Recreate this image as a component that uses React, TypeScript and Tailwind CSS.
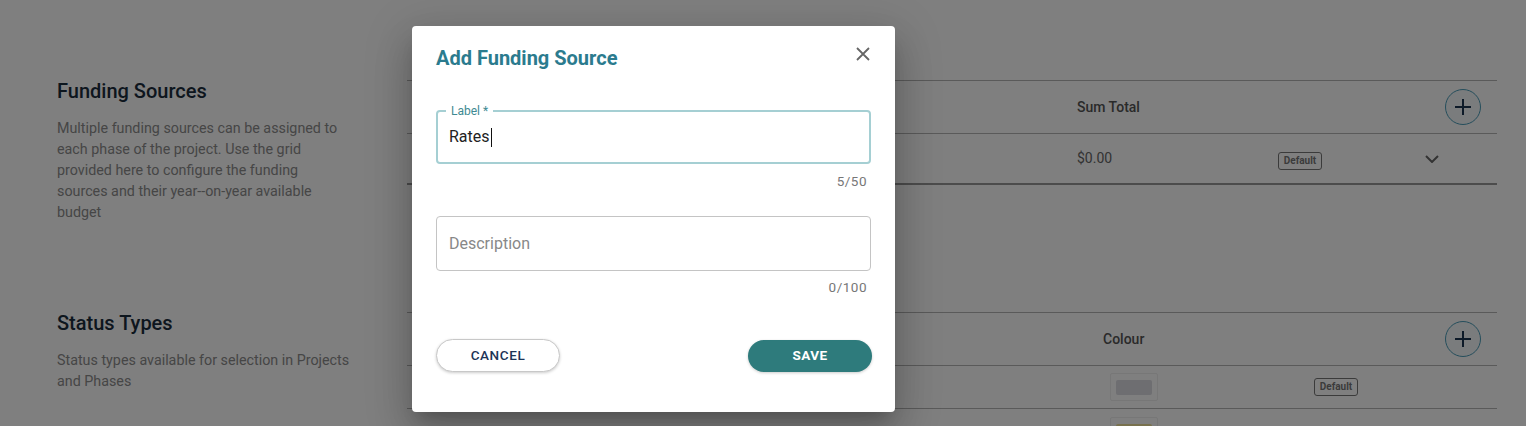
import React from "react";

const font = { fontFamily: "Roboto, 'Liberation Sans', sans-serif" };

function PlusButton() {
  return (
    <div className="w-9 h-9 rounded-full border border-[#4a9cb8] bg-[#f4f8fa] flex items-center justify-center">
      <svg width="18" height="18" viewBox="0 0 18 18" fill="none" stroke="#1a3550" strokeWidth="2">
        <path d="M9 1v16M1 9h16" />
      </svg>
    </div>
  );
}

function Badge() {
  return (
    <span className="inline-flex items-center justify-center w-[44px] h-[18px] border border-[#777] rounded-[3px] text-[10px] font-bold text-[#777] leading-none">
      Default
    </span>
  );
}

function Chevron() {
  return (
    <svg width="14" height="8" viewBox="0 0 14 8" fill="none" stroke="#666" strokeWidth="2">
      <path d="M1 1l6 6 6-6" />
    </svg>
  );
}

export default function App() {
  return (
    <div className="relative w-[1526px] h-[426px] overflow-hidden bg-white" style={font}>
      {/* page */}
      <div className="pt-[80px] pl-[57px] pr-[29px]">
        {/* Funding sources */}
        <div className="flex h-[232px]">
          <div className="w-[350px] shrink-0">
            <h2 className="text-[20px] leading-[22px] font-medium text-[#1b2c3c]">Funding Sources</h2>
            <p className="mt-4 text-[14.3px] leading-[21px] text-[#8c8c8c] w-[286px]">
              Multiple funding sources can be assigned to each phase of the project. Use the grid provided here to configure the funding sources and their year--on-year available budget
            </p>
          </div>
          <div className="flex-1 self-start">
            <div className="flex items-center h-[53px] border-t border-[#b4b4b4]">
              <div className="w-[670px] pl-4 text-[14px] font-medium text-[#555]">Name</div>
              <div className="flex-1 text-[14px] font-medium text-[#555]">Sum Total</div>
              <div className="pr-4"><PlusButton /></div>
            </div>
            <div className="flex items-center h-[52px] border-t border-b-2 border-t-[#b4b4b4] border-b-[#999]">
              <div className="w-[670px] pl-4 text-[14px] text-[#666]">Rates</div>
              <div className="w-[201px] text-[14px] text-[#666]">$0.00</div>
              <div className="w-[147px]"><Badge /></div>
              <Chevron />
            </div>
          </div>
        </div>

        {/* Status types */}
        <div className="flex">
          <div className="w-[350px] shrink-0">
            <h2 className="text-[20px] leading-[22px] font-medium text-[#1b2c3c]">Status Types</h2>
            <p className="mt-4 text-[14.3px] leading-[21px] text-[#8c8c8c] w-[300px]">
              Status types available for selection in Projects and Phases
            </p>
          </div>
          <div className="flex-1 self-start">
            <div className="flex items-center h-[53px] border-t border-[#b4b4b4]">
              <div className="w-[696px] pl-4 text-[14px] font-medium text-[#555]">Name</div>
              <div className="flex-1 text-[14px] font-medium text-[#555]">Colour</div>
              <div className="pr-4"><PlusButton /></div>
            </div>
            <div className="flex items-center h-[43px] border-t border-[#b4b4b4]">
              <div className="w-[703px] pl-4 text-[14px] text-[#666]">Active</div>
              <div className="w-[48px] h-[28px] border border-[#eeeeee] rounded-[2px] flex items-center justify-center">
                <div className="w-[36px] h-[15px] rounded-[2px] bg-[#dcdce2]" />
              </div>
              <div className="w-[156px]" />
              <Badge />
            </div>
            <div className="flex items-start h-[43px] border-t border-[#b4b4b4] pt-[8px]">
              <div className="w-[703px] pl-2 pt-[6px] text-[14px] leading-5 text-[#666]">↑ &nbsp; &nbsp; Approved</div>
              <div className="w-[48px] h-[28px] border border-[#eeeeee] rounded-[2px] flex items-center justify-center">
                <div className="w-[36px] h-[15px] rounded-[2px] bg-[#f0e29c]" />
              </div>
            </div>
          </div>
        </div>
      </div>

      {/* overlay */}
      <div className="absolute inset-0 bg-black/50" />

      {/* modal */}
      <div className="absolute left-[412px] top-[26px] w-[483px] h-[386px] bg-white rounded-[4px] shadow-[0_11px_15px_-7px_rgba(0,0,0,0.2),0_24px_38px_3px_rgba(0,0,0,0.14),0_9px_46px_8px_rgba(0,0,0,0.12)] px-6 pt-5 flex flex-col">
        <div className="flex items-start justify-between">
          <h1 className="text-[20px] leading-6 font-bold text-[#2b7b8e]">Add Funding Source</h1>
          <button className="mt-[1px] mr-[1px]">
            <svg width="14" height="14" viewBox="0 0 14 14" fill="none" stroke="#666" strokeWidth="1.8">
              <path d="M1 1l12 12M13 1L1 13" />
            </svg>
          </button>
        </div>

        <div className="relative mt-10 h-[54px] border-2 border-[#a5cfd3] rounded-[4px] flex items-center px-[11px]">
          <span className="absolute -top-[9px] left-[8px] bg-white px-[5px] text-[12px] leading-4 text-[#3e8a92]">Label *</span>
          <span className="text-[16px] text-[#222]">Rates</span>
          <span className="w-px h-[19px] bg-[#111] ml-[1px]" />
        </div>
        <div className="mt-[9px] pr-1 text-right text-[13.5px] tracking-[0.5px] leading-4 text-[#777]">5/50</div>

        <div className="mt-[27px] h-[55px] border border-[#c4c4c4] rounded-[4px] flex items-center px-3">
          <span className="text-[16px] text-[#888]">Description</span>
        </div>
        <div className="mt-[8px] pr-1 text-right text-[13.5px] tracking-[0.5px] leading-4 text-[#777]">0/100</div>

        <div className="mt-[44px] flex justify-between items-center">
          <button className="w-[124px] h-[33px] rounded-full border border-[#c8c8c8] bg-white shadow-[0_1px_3px_rgba(0,0,0,0.2)] text-[13.5px] font-medium tracking-[0.6px] text-[#1d3557]">
            CANCEL
          </button>
          <button className="ml-auto mr-[-1px] w-[124px] h-[32px] rounded-full bg-[#2e7b7c] shadow-[0_1px_3px_rgba(0,0,0,0.2)] text-[13.5px] font-bold tracking-[0.4px] text-white">
            SAVE
          </button>
        </div>
      </div>
    </div>
  );
}
